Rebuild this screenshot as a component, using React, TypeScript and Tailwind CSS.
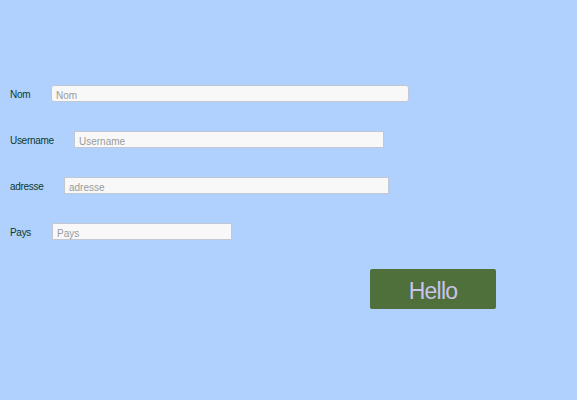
import React from 'react';

const fields = [
  { label: 'Nom', offset: 'ml-[51px]', width: 'w-[358px]', rounded: 'rounded-[3px]' },
  { label: 'Username', offset: 'ml-[74px]', width: 'w-[310px]', rounded: 'rounded-none' },
  { label: 'adresse', offset: 'ml-[64px]', width: 'w-[325px]', rounded: 'rounded-none' },
  { label: 'Pays', offset: 'ml-[52px]', width: 'w-[180px]', rounded: 'rounded-none' },
];

const App = () => {
  return (
    <div className="min-h-[400px] w-full bg-[#b0d0fe] pt-[85px] font-['Liberation_Sans',Arial,sans-serif]">
      <div className="flex flex-col gap-[29px]">
        {fields.map(field => (
          <div key={field.label} className="relative flex h-[17px] items-center">
            <span className="absolute left-[10px] top-[5px] text-[10px] leading-none tracking-[-0.3px] text-[#0b3a2c]">
              {field.label}
            </span>
            <input
              className={`${field.offset} ${field.width} ${field.rounded} h-[17px] border border-[#c2c8d2] bg-[#f8f8f8] px-[4px] pt-[3px] text-[10px] leading-none text-[#333] outline-none placeholder:text-[#9a9a9a]`}
              placeholder={field.label}
              type="text"
            />
          </div>
        ))}
        <div className="flex">
          <button
            className="ml-[370px] h-[40px] w-[126px] rounded-[2px] bg-[#4f6f3b] pt-[5px] text-[23px] leading-none tracking-[-0.8px] text-[#c9c3ec]"
            type="button"
          >
            Hello
          </button>
        </div>
      </div>
    </div>
  );
};

export default App;
